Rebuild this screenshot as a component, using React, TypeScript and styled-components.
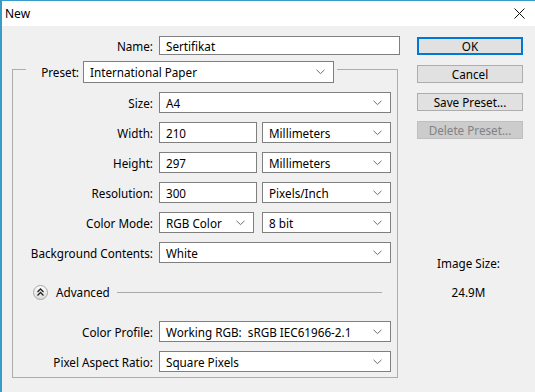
import React from 'react';
import styled, { createGlobalStyle } from 'styled-components';

const GlobalStyle = createGlobalStyle`
  html, body {
    margin: 0;
    padding: 0;
    background: #f0f0f0;
  }
  body {
    font-family: 'Noto Sans', 'Open Sans', sans-serif;
    font-size: 11.7px;
    color: #000;
  }
`;

const Window = styled.div`
  width: 535px;
  height: 392px;
  box-sizing: border-box;
  border-left: 2px solid #3a9cc6;
  border-top: 1px solid #3a9cc6;
  background: #f0f0f0;
  display: flex;
  flex-direction: column;
  overflow: hidden;
`;

const TitleBar = styled.div`
  height: 25px;
  flex: none;
  background: #fff;
  display: flex;
  align-items: center;
  justify-content: space-between;
  padding: 0 10px 0 3px;
`;

const Title = styled.span`
  font-size: 12px;
  color: #000;
`;

const Body = styled.div`
  display: flex;
  padding: 10px 0 0 10px;
`;

const LeftColumn = styled.div`
  width: 388px;
  display: flex;
  flex-direction: column;
`;

const RightColumn = styled.div`
  width: 106px;
  margin-left: 17px;
  padding-top: 1px;
  display: flex;
  flex-direction: column;
  gap: 10px;
`;

const Row = styled.div<{ $top?: number; $h?: number }>`
  display: flex;
  align-items: center;
  gap: 5px;
  height: ${({ $h }) => $h ?? 21}px;
  margin-top: ${({ $top }) => ($top ?? 9)}px;
`;

const Label = styled.label<{ $w?: number; $gap?: number }>`
  width: ${({ $w }) => $w ?? 140}px;
  margin-right: ${({ $gap }) => $gap ?? 1}px;
  text-align: right;
  white-space: nowrap;
  flex: none;
`;

const Field = styled.div<{ $w: number; $h?: number; $gap?: number }>`
  width: ${({ $w }) => $w}px;
  height: ${({ $h }) => $h ?? 21}px;
  margin-left: ${({ $gap }) => $gap ?? 0}px;
  box-sizing: border-box;
  flex: none;
  border: 1px solid #7f7f7f;
  background: #fff;
  display: flex;
  align-items: center;
  justify-content: space-between;
  padding: 0 8px 0 6px;
  white-space: pre;
`;

const Chevron = () => (
  <svg width="9" height="6" viewBox="0 0 9 6">
    <path d="M0.5 0.8 L4.5 4.6 L8.5 0.8" fill="none" stroke="#6d6d6d" strokeWidth="1" />
  </svg>
);

const Select = ({ w, h, gap, value }: { w: number; h?: number; gap?: number; value: string }) => (
  <Field $w={w} $h={h} $gap={gap}>
    <span>{value}</span>
    <Chevron />
  </Field>
);

const Group = styled.div`
  margin-top: 14px;
  width: 386px;
  box-sizing: border-box;
  border: 1px solid #adadad;
  padding: 0 5px 5px 0;
  display: flex;
  flex-direction: column;
`;

const PresetRow = styled.div`
  margin-top: -9px;
  margin-left: 13px;
  align-self: flex-start;
  display: flex;
  align-items: center;
  background: #f0f0f0;
  padding: 0 3px 0 0;
  height: 22px;
`;

const AdvancedRow = styled.div`
  display: flex;
  align-items: center;
  height: 16px;
  margin-top: 21px;
  padding: 0 10px 0 20px;
`;

const Toggle = styled.span`
  width: 15px;
  height: 15px;
  box-sizing: border-box;
  border-radius: 50%;
  border: 1px solid #a7a7a7;
  background: linear-gradient(#fdfdfd, #dcdcdc);
  display: flex;
  align-items: center;
  justify-content: center;
  flex: none;
`;

const AdvancedText = styled.span`
  margin-left: 8px;
`;

const Rule = styled.span`
  flex: 1;
  height: 1px;
  margin-left: 7px;
  background: #a9a9a9;
`;

const Button = styled.div<{ $primary?: boolean; $disabled?: boolean }>`
  height: 18px;
  box-sizing: border-box;
  display: flex;
  align-items: center;
  justify-content: center;
  background: ${({ $disabled }) => ($disabled ? '#cccccc' : '#e1e1e1')};
  border: ${({ $primary, $disabled }) =>
    $primary ? '2px solid #0078d7' : $disabled ? '1px solid #bfbfbf' : '1px solid #adadad'};
  color: ${({ $disabled }) => ($disabled ? '#838383' : '#000')};
`;

const ImageInfo = styled.div`
  margin-top: 106px;
  display: flex;
  flex-direction: column;
  align-items: center;
  gap: 13px;
  padding-right: 3px;
  line-height: 16px;
`;

export default function App() {
  return (
    <>
      <GlobalStyle />
      <Window>
        <TitleBar>
          <Title>New</Title>
          <svg width="11" height="11" viewBox="0 0 11 11">
            <path d="M0.5 0.5 L10.5 10.5 M10.5 0.5 L0.5 10.5" stroke="#111" strokeWidth="1" />
          </svg>
        </TitleBar>
        <Body>
          <LeftColumn>
            <Row $top={0} $h={19}>
              <Label $w={141}>Name:</Label>
              <Field $w={241} $h={19}>Sertifikat</Field>
            </Row>
            <Group>
              <PresetRow>
                <Label $w={53} $gap={4}>Preset:</Label>
                <Select w={251} h={22} value="International Paper" />
              </PresetRow>
              <Row>
                <Label>Size:</Label>
                <Select w={232} value="A4" />
              </Row>
              <Row>
                <Label>Width:</Label>
                <Field $w={98}>210</Field>
                <Select w={129} value="Millimeters" />
              </Row>
              <Row>
                <Label>Height:</Label>
                <Field $w={98}>297</Field>
                <Select w={129} value="Millimeters" />
              </Row>
              <Row>
                <Label>Resolution:</Label>
                <Field $w={98}>300</Field>
                <Select w={129} value="Pixels/Inch" />
              </Row>
              <Row>
                <Label>Color Mode:</Label>
                <Select w={95} value="RGB Color" />
                <Select w={129} gap={3} value="8 bit" />
              </Row>
              <Row>
                <Label>Background Contents:</Label>
                <Select w={232} value="White" />
              </Row>
              <AdvancedRow>
                <Toggle>
                  <svg width="9" height="9" viewBox="0 0 9 9">
                    <path d="M1.5 4 L4.5 1 L7.5 4 M1.5 7.5 L4.5 4.5 L7.5 7.5" fill="none" stroke="#222" strokeWidth="1.3" />
                  </svg>
                </Toggle>
                <AdvancedText>Advanced</AdvancedText>
                <Rule />
              </AdvancedRow>
              <Row $top={21}>
                <Label>Color Profile:</Label>
                <Select w={232} value="Working RGB:  sRGB IEC61966-2.1" />
              </Row>
              <Row>
                <Label>Pixel Aspect Ratio:</Label>
                <Select w={232} value="Square Pixels" />
              </Row>
            </Group>
          </LeftColumn>
          <RightColumn>
            <Button $primary>OK</Button>
            <Button>Cancel</Button>
            <Button>Save Preset...</Button>
            <Button $disabled>Delete Preset...</Button>
            <ImageInfo>
              <span>Image Size:</span>
              <span>24.9M</span>
            </ImageInfo>
          </RightColumn>
        </Body>
      </Window>
    </>
  );
}
